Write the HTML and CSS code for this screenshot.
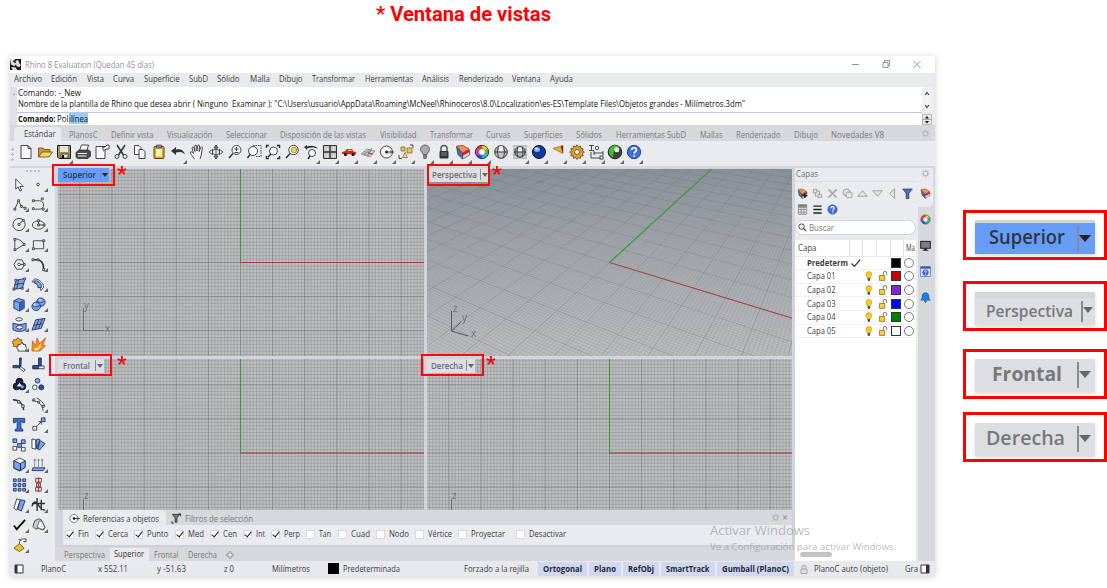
FILE: index.html
```html
<!DOCTYPE html>
<html lang="es">
<head>
<meta charset="utf-8">
<title>Ventana de vistas</title>
<link rel="stylesheet" href="styles.css">
</head>
<body>
<h1 class="heading"><span data-w="175">* Ventana de vistas</span></h1>
<div class="page">
<main class="window">
  <header class="titlebar">
    <svg class="logo" viewBox="0 0 12 12"><rect width="12" height="12" fill="#111"/><path d="M0 0h6L3 3 7 5 5 8 1 6zM6 2l3-1 1 3 2 3-2 2-3-1zM1 9l5 0 2 3H3z" fill="#ddd"/></svg>
    <span class="app-name" data-w="129">Rhino 8 Evaluation (Quedan 45 días)</span>
    <svg class="wbtns" viewBox="0 0 72 12"><path d="M2 6.500h7M33 4.500h5v5h-5zM34.500 4V2.500h5v5H38M63.500 3l7 7M70.500 3l-7 7" fill="none" stroke="#888" stroke-width=".9"/></svg>
  </header>
  <nav class="menu">
    <span data-w="28">Archivo</span><span data-w="26">Edición</span><span data-w="17">Vista</span><span data-w="21">Curva</span><span data-w="35.500">Superficie</span><span data-w="19">SubD</span><span data-w="22.500">Sólido</span><span data-w="20">Malla</span><span data-w="23.500">Dibujo</span><span data-w="43">Transformar</span><span data-w="48">Herramientas</span><span data-w="27">Análisis</span><span data-w="44">Renderizado</span><span data-w="28.500">Ventana</span><span data-w="23">Ayuda</span>
  </nav>
  <section class="command">
    <div class="grip"></div>
    <div class="cmd-body">
      <div class="history"><p><span data-w="63">Comando: -_New</span></p><p><span data-w="727">Nombre de la plantilla de Rhino que desea abrir ( Ninguno&nbsp; Examinar ): "C:\Users\usuario\AppData\Roaming\McNeel\Rhinoceros\8.0\Localization\es-ES\Template Files\Objetos grandes - Milímetros.3dm"</span></p></div>
      <div class="prompt"><b data-w="37.500">Comando:</b><span class="typed" data-w="11.500">Pol</span><span class="sel" data-w="19">ilínea</span></div>
    </div>
    <svg class="cmd-scroll" viewBox="0 0 10 39"><path d="M0 0h10v25H0z" fill="#f3f3f3"/><path d="M3 8l2-2.500L7 8M3 18l2 2.500L7 18" fill="none" stroke="#444" stroke-width="1.200"/><path d="M.5 27.500h9v5h-9zM.5 32.500h9v5h-9z" fill="#e6e6e6" stroke="#999" stroke-width=".6"/><path d="M3 31.500l2-2.500 2 2.500zM3 34l2 2.500L7 34z" fill="#111"/></svg>
  </section>
  <nav class="tabs">
    <span class="tab on"><span data-w="31.500">Estándar</span></span><span data-w="28.500">PlanosC</span><span data-w="42.500">Definir vista</span><span data-w="45.500">Visualización</span><span data-w="41">Seleccionar</span><span data-w="86">Disposición de las vistas</span><span data-w="36.500">Visibilidad</span><span data-w="43">Transformar</span><span data-w="24.500">Curvas</span><span data-w="38.500">Superficies</span><span data-w="26">Sólidos</span><span data-w="70">Herramientas SubD</span><span data-w="22.500">Mallas</span><span data-w="44.500">Renderizado</span><span data-w="24">Dibujo</span><span data-w="53">Novedades V8</span>
    <svg class="gear" viewBox="0 0 10 10"><use href="#gear"/></svg>
  </nav>
  <div class="toolbar">
    <div class="grip"></div>
    <i><svg viewBox="0 0 16 16"><path d="M3 1.500h7l3 3v10H3zM10 1.500v3h3" class="k w"/></svg></i>
    <i><svg viewBox="0 0 16 16"><path d="M1.500 13V4H6l1 1.500h6V8" fill="#d99a1c" stroke="#543" stroke-width=".8"/><path d="M1.500 13L5 8h10.500L12 13z" fill="#ffd65a" stroke="#543" stroke-width=".8"/></svg></i>
    <i class="m"><svg viewBox="0 0 16 16"><path d="M1.500 1.500h13v13H3l-1.500-1.500z" fill="#9a9250" stroke="#222"/><path d="M4 2h8v6H4z" fill="#e4e4dc"/><path d="M5 10h7v4H5z" fill="#ddd" stroke="#222" stroke-width=".7"/><path d="M6 11h2v3H6z"/></svg></i>
    <i><svg viewBox="0 0 16 16"><path d="M4.500 6.500l2-5.500h7L12 6.500" class="k w"/><path d="M1 8.500L4 6h9.500l2 1.500v4.500L13 14.500H2.500L1 12.500z" fill="#4a4a4a" stroke="#222" stroke-width=".7"/><path d="M2.500 9.500h9.500M3 12h8.500" stroke="#fff" stroke-width="1.200"/></svg></i>
    <i><svg viewBox="0 0 16 16"><path d="M2 2.500h9v12H2z" class="k w"/><path d="M8 3h3l2-2h2v4h-3L9 7M9 3v3" class="k w"/></svg></i>
    <i><svg viewBox="0 0 16 16"><path d="M4 1l6.500 10M12 1L5.500 11" class="k t"/><circle cx="4" cy="12.500" r="2" class="k"/><circle cx="12" cy="12.500" r="2" class="k"/></svg></i>
    <i><svg viewBox="0 0 16 16"><path d="M2.500 1.500H7l2 2v7H2.500z" class="k w"/><path d="M7 5.500h4l2 2v7H7z" class="k w"/></svg></i>
    <i><svg viewBox="0 0 16 16"><rect x="3" y="2.500" width="10" height="12" rx="1" fill="#e7a928" stroke="#543"/><path d="M5 5h6v7.500H5z" fill="#fff3b0"/><path d="M5.500 1h5v3h-5z" fill="#888" stroke="#333" stroke-width=".6"/></svg></i>
    <i class="m"><svg viewBox="0 0 16 16"><path d="M1 7l5-4v2.500c5-1 8 1 9 5-2.500-3-5-3-9-2V11z" fill="#333"/></svg></i>
    <i><svg viewBox="0 0 16 16"><path d="M5.500 15C4 12.500 1.200 10 1.200 8.300c1-1 2.300-.2 3.300 1.200L3 4c.3-1.400 1.700-1.200 2 0l1 3.500L5.700 2c.3-1.300 1.800-1.200 2 0l.3 5 .6-5.200c.4-1.200 1.800-1 1.900.2L10.200 7.500l1.500-4c.6-1 1.900-.6 1.700.6L12.300 11l-1.300 4" class="k w"/></svg></i>
    <i><svg viewBox="0 0 16 16"><path d="M8 1v14M8 1L6 4h4zM8 15l-2-3h4z" class="k w"/><path d="M4 6.500c2.500-1.200 5.500-1.200 8 0M4 9.500c2.500 1.200 5.500 1.200 8 0M1 8l3.500-2.500v5zM15 8l-3.500-2.500v5z" class="k w"/></svg></i>
    <i><svg viewBox="0 0 16 16"><circle cx="9.500" cy="6" r="4.500" class="k w"/><path d="M6 9.500L2 14" class="k t"/><path d="M7.500 5h4M9.500 3v4M7.500 8.500h4" class="k"/></svg></i>
    <i><svg viewBox="0 0 16 16"><circle cx="7" cy="7" r="4.500" class="k w"/><path d="M4 10.500L1.500 14" class="k t"/><path d="M7 1.500h8v11H9" class="k" stroke-dasharray="1.500 1"/></svg></i>
    <i><svg viewBox="0 0 16 16"><circle cx="8.500" cy="7" r="4" class="k w"/><path d="M6 10l-3 3" class="k t"/><path d="M1.500 4V1.500H4M12 1.500h2.500V4M14.500 12v2.500H12M1.500 12v2.500H4" class="k t"/></svg></i>
    <i><svg viewBox="0 0 16 16"><circle cx="9.500" cy="6" r="4.700" class="k w"/><circle cx="10" cy="6" r="2.800" fill="#f2dc19" stroke="#776" stroke-width=".7"/><path d="M6 9.500L2 14" class="k t"/></svg></i>
    <i class="m"><svg viewBox="0 0 16 16"><path d="M1 3l3-2v1.500c4-1.500 9-1 11 2.500-3-2-7-2-11-.5V6z" fill="#333"/><circle cx="9" cy="9" r="3.500" class="k w"/><path d="M7 12l-2 3" class="k t"/></svg></i>
    <i class="m"><svg viewBox="0 0 16 16"><path d="M1.500 1.500h13v13h-13z" fill="#c4c4c4" stroke="#333"/><path d="M8 1.500v13M1.500 8h13" stroke="#333" stroke-width="1.400"/><path d="M5 3v4M3 5h4M11.500 3v4M9.500 5h4M5 10v4M3 12h4M11.500 10v4M9.500 12h4" stroke="#eee" stroke-width=".7"/></svg></i>
    <i class="m"><svg viewBox="0 0 16 16"><path d="M1 10V8l3-.8L6 5h5l1.500 2.500 2.500.5v2.500z" fill="#dc2418"/><path d="M6.500 7l1-1.200h2.800L11 7z" fill="#f6c0b8"/><circle cx="4.500" cy="10.500" r="1.500"/><circle cx="12" cy="10.500" r="1.500"/></svg></i>
    <i class="m"><svg viewBox="0 0 16 16"><path d="M1 10l6-5 8 2-5 6zM4 7.500l8 3M3 9l6 3M9 5.500L4 11M11.500 6L7 12" stroke="#888" fill="#ccc" stroke-width=".8"/><path d="M8 9l4-5" stroke="#28a43a"/><path d="M8 9l5 1" stroke="#c33"/></svg></i>
    <i class="m"><svg viewBox="0 0 16 16"><circle cx="7.500" cy="8" r="6" class="k w"/><path d="M7.500 8H15M12 6.500v3" class="k"/><circle cx="7.500" cy="8" r="1.600" fill="#333"/></svg></i>
    <i class="m"><svg viewBox="0 0 16 16"><path d="M3 3h4v4H3zM9 4h5v5H9z" fill="#f7c52b" stroke="#765" stroke-width=".8"/><path d="M7 8.500l2.500 5h-5z" fill="#fbe29a" stroke="#765" stroke-width=".8"/><path d="M1 11v3.500h3M12 1h3v3" class="k"/></svg></i>
    <i class="m"><svg viewBox="0 0 16 16"><path d="M8 1a4.500 4.500 0 0 1 4.500 4.500c0 2-2 3-2.500 5H6c-.5-2-2.500-3-2.500-5A4.500 4.500 0 0 1 8 1z" fill="#aaa" stroke="#666"/><path d="M6 11h4v3l-1 1H7l-1-1z" fill="#777"/></svg></i>
    <i class="m"><svg viewBox="0 0 16 16"><path d="M5 7V4.500a3 3 0 0 1 6 0V7" fill="none" stroke="#555" stroke-width="1.500"/><rect x="3.500" y="7" width="9" height="7.500" rx="1" fill="#333"/><path d="M5 9h6M5 11h6" stroke="#888"/></svg></i>
    <i class="m"><svg viewBox="0 0 16 16"><use href="#layer"/></svg></i>
    <i class="m"><svg viewBox="0 0 16 16"><use href="#wheel"/></svg></i>
    <i><svg viewBox="0 0 16 16"><circle cx="8" cy="8" r="6.300" fill="#c4c4c4" stroke="#333"/><path d="M6 2.200h4V8H6z" fill="#f4f4f4"/><path d="M6 2C4 6 4 10 6 14M10 2c2 4 2 8 0 12M2 8h12" class="k"/></svg></i>
    <i class="m"><svg viewBox="0 0 16 16"><path d="M1 2h14M1 5h14M1 8h14M1 11h14M1 14h14M2 1v14M5 1v14M8 1v14M11 1v14M14 1v14" stroke="#888" stroke-width=".6"/><circle cx="8" cy="8" r="5.300" fill="#b4b4b4" stroke="#333"/><path d="M6.200 3.200h3.600V8H6.200z" fill="#eee"/><path d="M6 3C4.500 7 4.500 9 6 13M10 3c1.500 4 1.500 6 0 10M3 8h10" class="k"/></svg></i>
    <i class="m"><svg viewBox="0 0 16 16"><circle cx="8" cy="8" r="6.500" fill="#0e3a9c" stroke="#112"/><ellipse cx="6" cy="5.500" rx="3" ry="2.500" fill="#7fa8f5"/><circle cx="5.500" cy="5" r="1" fill="#fff"/></svg></i>
    <i class="m"><svg viewBox="0 0 16 16"><path d="M3 4.500l10-3v8z" fill="#eea62c" stroke="#8a5712" stroke-width=".6"/><path d="M10.500 2.500l2.500-1v8z" fill="#7b3420"/></svg></i>
    <i class="m"><svg viewBox="0 0 16 16"><path d="M8 .8l1.200 2 2.200-.8.500 2.300 2.300.5-.8 2.200 2 1.200-2 1.200.8 2.200-2.300.5-.5 2.300-2.200-.8-1.200 2-1.200-2-2.200.8-.5-2.300L1.800 11.600l.8-2.200-2-1.200 2-1.200-.8-2.200 2.300-.5.500-2.300 2.200.8z" fill="#e6a020" stroke="#543" stroke-width=".8"/><circle cx="8" cy="8" r="2.500" fill="#f4f4f4" stroke="#543" stroke-width=".8"/></svg></i>
    <i class="m"><svg viewBox="0 0 16 16"><path d="M1 1.500h5M3.500 1.500v5M1 6.500h5M6 9h9M6 7v4M15 7v4M3 8v6h9" class="k"/><circle cx="9" cy="4" r="1.700" class="k w"/><rect x="12" y="12" width="3" height="3" class="k w"/></svg></i>
    <i class="m"><svg viewBox="0 0 16 16"><circle cx="8" cy="8" r="6.800" fill="#3c443c" stroke="#222"/><path d="M2.500 5a6.300 6.300 0 0 1 10-2c-5 1-7 5-6 10.500C2.500 12 .8 8 2.500 5z" fill="#43bd32"/><circle cx="9.800" cy="5.800" r="2.500" fill="#e8f8e0"/></svg></i>
    <i class="m"><svg viewBox="0 0 16 16"><use href="#help"/></svg></i>
  </div>
  <div class="work">
    <aside class="tools"><div class="dots"></div><div class="toolgrid">
      <i><svg viewBox="0 0 16 16"><path d="M4 2v11l2.500-2.500L8.500 15l1.800-.8-2-4H12z" class="k w"/></svg></i>
      <i class="m"><svg viewBox="0 0 16 16"><circle cx="7.500" cy="8" r="1.400" class="k"/></svg></i>
      <i class="m"><svg viewBox="0 0 16 16"><path d="M3 13L7 4l3 6 4 2" class="k"/><path d="M2 12h2v2H2zM6 3h2v2H6zM13 11h2v2h-2zM9 9h2v2H9z" class="k w"/></svg></i>
      <i class="m"><svg viewBox="0 0 16 16"><path d="M3 4h6c6 0 6 9 0 9H4" class="k"/><path d="M1.500 3h2v2h-2zM11 1h2v2h-2zM1.500 11.500h2v2h-2zM12 12h2v2h-2z" class="k w"/></svg></i>
      <i class="m"><svg viewBox="0 0 16 16"><circle cx="7.500" cy="8" r="6.500" class="k"/><path d="M7.500 8L12 3" class="k"/><path d="M6.500 7h2v2h-2zM11 2.500h2v2h-2z" class="k w"/></svg></i>
      <i class="m"><svg viewBox="0 0 16 16"><ellipse cx="8" cy="8.500" rx="6.500" ry="4.500" class="k"/><path d="M8 8.500V4M8 8.500h6" class="k"/><path d="M7 7.500h2v2H7zM7 3h2v2H7zM13 7.500h2v2h-2z" class="k w"/></svg></i>
      <i class="m"><svg viewBox="0 0 16 16"><path d="M3 2v12l10-6C11 4 7 2 3 2" class="k"/><path d="M2 1.500h2v2H2zM2 12.500h2v2H2zM12 7h2v2h-2z" class="k w"/></svg></i>
      <i class="m"><svg viewBox="0 0 16 16"><path d="M2.500 4h11v8.500h-11z" class="k"/><path d="M1.500 11.500h2v2h-2zM12.500 3h2v2h-2z" class="k w"/></svg></i>
      <i class="m"><svg viewBox="0 0 16 16"><path d="M2 8l3-5h5.500l3 5-3 5H5z" class="k"/><circle cx="7.500" cy="8" r="1.400" class="k w"/><path d="M9 8h4" class="k"/><path d="M12 7h2v2h-2z" class="k w"/></svg></i>
      <i class="m"><svg viewBox="0 0 16 16"><path d="M2 3h4c5.500 0 7.500 4 7.500 10" fill="none" stroke="#333" stroke-width="1.700"/><path d="M1 2h2v2H1zM12.500 12.500h2v2h-2zM6.500 2h2v2h-2z" class="k w"/></svg></i>
      <i class="m"><svg viewBox="0 0 16 16"><path d="M4 3.500l10-2L11 12l-9 1z" class="b"/><path d="M7 3l-2 9.500M3 8l10-1.500" class="k"/><path d="M3 2.500h2v2H3zM12.500 1h2v2h-2zM1 12h2v2H1zM10 11h2v2h-2z" class="k w"/></svg></i>
      <i class="m"><svg viewBox="0 0 16 16"><path d="M1 5l3-3c5 .5 9 4 9.500 9l-3 3.500c-.5-5-4-9-9.500-9.500z" class="k w"/><path d="M4 4c5 0 7 3 7.500 7l-4 .5C7.500 8.500 6 7 3.500 6.500z" class="b"/></svg></i>
      <i class="m"><svg viewBox="0 0 16 16"><path d="M2 4l5-2.500 6 2v8.500l-5 3-6-3z" class="b"/><path d="M2 4l6 2 5-2.500M8 6v9" class="k"/><path d="M8 6l5-2.500V12l-5 3z" fill="#345fbd"/></svg></i>
      <i class="m"><svg viewBox="0 0 16 16"><circle cx="10.500" cy="5.500" r="4.500" class="b"/><circle cx="5.500" cy="10" r="4.500" class="b"/><path d="M1.500 9c3 2 5 2 8 0M6.500 4.500c3 2 5 2 8 0" fill="none" stroke="#1d3a80" stroke-width=".8"/><circle cx="4" cy="8" r="1.200" fill="#cfe0ff"/><circle cx="9.500" cy="3.300" r="1.200" fill="#cfe0ff"/></svg></i>
      <i class="m"><svg viewBox="0 0 16 16"><ellipse cx="7.500" cy="2.500" rx="3.500" ry="1.700" class="k w"/><path d="M1 6.500c4 2 10 2 14 0v7c-4 2.500-10 2.500-14 0z" class="b"/><ellipse cx="8" cy="11" rx="3.500" ry="1.800" class="k w"/></svg></i>
      <i class="m"><svg viewBox="0 0 16 16"><path d="M5 3l10-1.500-4 10.500-10 2z" class="b"/><path d="M8.500 2.500L4.500 13M12 2L8 12.500M3 9l9.500-2" class="k"/></svg></i>
      <i class="m"><svg viewBox="0 0 16 16"><path d="M1.500 3h3c0-2.500 3.500-2.500 3.500 0h2.500v3c2.500 0 2.500 3 0 3v1h-9V7c-2 0-2-2.500 0-2.500z" fill="#f2a51d" stroke="#543" stroke-width=".8"/><path d="M6.500 8h2.500c0-2 3-2 3 0h2.500v2.500c2 0 2 3 0 3V15h-8v-2c-2 0-2-3 0-3z" class="k w"/></svg></i>
      <i><svg viewBox="0 0 16 16"><path d="M1 15L1.500 4l3.500 5L6.500 1l2.500 6L15.500 1l-3 8h3l-6 6z" fill="#f39517" stroke="#b3471a" stroke-width=".7"/><path d="M3.500 14l1.500-3 2 1 4-5-1 4-3 3z" fill="#fff0a2"/></svg></i>
      <i><svg viewBox="0 0 16 16"><path d="M9 10l5 3.500-1.500 2L8 12z" class="k w"/><path d="M1 9h7v2.500H1zM8 1h2l-.5 9L8 10z" class="n"/></svg></i>
      <i><svg viewBox="0 0 16 16"><path d="M2 9.500h12v3H2z" class="k w"/><path d="M2 9h6v3.500H2zM8 1h3v8.500H8z" class="n"/></svg></i>
      <i class="m"><svg viewBox="0 0 16 16"><circle cx="8" cy="5" r="3.700" fill="#16284f" stroke="#111"/><circle cx="5" cy="10" r="3.700" fill="#16284f" stroke="#111"/><circle cx="11" cy="10" r="3.700" fill="#16284f" stroke="#111"/><path d="M8 6l3 4H5z" fill="#e8eefc"/><circle cx="11" cy="10.500" r="1.700" fill="#7ba3ef"/></svg></i>
      <i><svg viewBox="0 0 16 16"><circle cx="7" cy="4" r="2.500" class="b"/><circle cx="4" cy="11" r="2.500" class="k w"/><circle cx="11" cy="11" r="2.700" class="n"/></svg></i>
      <i><svg viewBox="0 0 16 16"><path d="M1 3c7 0 11 5 11.500 11" class="k t"/><path d="M6 4h2.500v2.500H6zM10.500 8.500H13V11h-2.500z" class="k w"/></svg></i>
      <i class="m"><svg viewBox="0 0 16 16"><path d="M1 4c7 0 11 4 12 11M6 1c4 2 7 5 9 9" class="k"/><path d="M2 2h2v2H2zM7 4.500h2v2H7zM12 9h2v2h-2z" class="k w"/></svg></i>
      <i><svg viewBox="0 0 16 16"><path d="M1.500 1.500h12V6h-2l-.5-1.500H9.500v8l2 .5v2h-8v-2l2-.5v-8H4L3.500 6h-2z" class="b dkb"/></svg></i>
      <i class="m"><svg viewBox="0 0 16 16"><path d="M2 10h4v4H2z" class="k w"/><path d="M11 1h4v4h-4z" class="b"/><path d="M6 10l5-5M8 5h3v3" class="k"/></svg></i>
      <i><svg viewBox="0 0 16 16"><path d="M1 2h4v4H1zM10 3h4v4h-4zM6 7h4v4H6z" class="b"/><path d="M1 10h4v4H1zM10 11h4v4h-4z" class="k w"/></svg></i>
      <i><svg viewBox="0 0 16 16"><path d="M1 2l4 1v10l-4-1z" class="k w"/><path d="M6 2.500h3.500l-2 10H6zM10 4l5 3-6 7-3-2.500z" class="b"/></svg></i>
      <i class="m"><svg viewBox="0 0 16 16"><path d="M2 4l6-3 6 3v7l-6 4-6-3z" class="k w"/><path d="M2 4l7 3v7.500L2 12zM9 7l5-3v7l-5 3.500z" class="b"/></svg></i>
      <i class="m"><svg viewBox="0 0 16 16"><path d="M2 11.500h13l-2 3H1z" class="b"/><path d="M4 11V2M8 11V2M12 11V2M3 4l1-2 1 2M7 4l1-2 1 2M11 4l1-2 1 2" stroke="#888" fill="none"/></svg></i>
      <i class="m"><svg viewBox="0 0 16 16"><path d="M1.500 2h3v3h-3zM6.500 2h3v3h-3zM11.500 2h3v3h-3zM1.500 7h3v3h-3zM6.500 7h3v3h-3zM11.500 7h3v3h-3zM1.500 12h3v3h-3zM6.500 12h3v3h-3zM11.500 12h3v3h-3z" class="b"/></svg></i>
      <i class="m"><svg viewBox="0 0 16 16"><path d="M5 1.500h6v4H5zM6 6.500h4v4H6zM5 11h6v4H5z" class="k w"/><path d="M8 .5v15" stroke="#f02020" stroke-width="1.500"/></svg></i>
      <i class="m"><svg viewBox="0 0 16 16"><path d="M5 2l4 1-4 11-3-2z" class="k w"/><path d="M9 3l5 1-4 11-4-2z" class="b"/></svg></i>
      <i class="m"><svg viewBox="0 0 16 16"><path d="M1 10c2-6 4-6 7-1s4 4 7 5M6.500 1v14M11 3v11M1 7h14" class="k t"/></svg></i>
      <i class="m"><svg viewBox="0 0 16 16"><path d="M2 9l3 4L14 3" fill="none" stroke="#111" stroke-width="2"/></svg></i>
      <i class="m"><svg viewBox="0 0 16 16"><path d="M2 10l2-6 4-2 3 1 4 8-2 3-5-2-3 1z" fill="#c9c9c9" stroke="#444"/><path d="M6.500 11L9 4l3 1 2.500 6-2 2.500z" fill="#f0f0f0" stroke="#555" stroke-width=".8"/></svg></i>
      <i class="m"><svg viewBox="0 0 16 16"><path d="M2 12l6-5 5 5-5 3.500z" fill="#f0c028" stroke="#543" stroke-width=".8"/><path d="M8 7c0-3 1-5 4-5h3v3h-3M7 2.500l3 1" class="k w"/></svg></i>
    </div></aside>
    <section class="center">
      <div class="views">
        <div class="view"><canvas id="top" width="366" height="187"></canvas></div>
        <div class="view"><canvas id="persp" width="365" height="187"></canvas></div>
        <div class="view"><canvas id="front" width="366" height="151"></canvas></div>
        <div class="view"><canvas id="right" width="365" height="151"></canvas></div>
      </div>
      <div class="osnap">
        <div class="os-tabs">
          <span class="os-tab on"><svg viewBox="0 0 12 12"><circle cx="5.500" cy="6" r="4.500" fill="#f5f5f5" stroke="#555" stroke-width=".7"/><path d="M5.500 6H12M9 4.500v3" stroke="#333" stroke-width=".8"/><circle cx="5.500" cy="6" r="1.300"/></svg><span data-w="76">Referencias a objetos</span></span>
          <span class="os-tab"><svg viewBox="0 0 12 12"><path d="M1.500 1.500h8l-3 4v4.500h-2V5.500z" fill="#777" stroke="#222" stroke-width=".8"/><path d="M8 1h2.500v2.500M1 9v2h2" fill="none" stroke="#222"/></svg><span data-w="68">Filtros de selección</span></span>
          <svg class="os-close" viewBox="0 0 22 10"><use href="#gear"/><path d="M13.500 3l4 4M17.500 3l-4 4" stroke="#999" stroke-width="1.300"/></svg>
        </div>
        <div class="checks">
          <label class="c"><b></b><span data-w="11">Fin</span></label><label class="c"><b></b><span data-w="20">Cerca</span></label><label class="c"><b></b><span data-w="21.500">Punto</span></label><label class="c"><b></b><span data-w="16">Med</span></label><label class="c"><b></b><span data-w="14">Cen</span></label><label class="c"><b></b><span data-w="9">Int</span></label><label class="c"><b></b><span data-w="16">Perp</span></label><label><b></b><span data-w="12">Tan</span></label><label><b></b><span data-w="19">Cuad</span></label><label><b></b><span data-w="20">Nodo</span></label><label><b></b><span data-w="24">Vértice</span></label><label><b></b><span data-w="34">Proyectar</span></label><label class="last"><b></b><span data-w="37">Desactivar</span></label>
        </div>
      </div>
      <nav class="view-tabs"><span data-w="41">Perspectiva</span><span class="vt on"><span data-w="30">Superior</span></span><span data-w="24.500">Frontal</span><span data-w="29">Derecha</span><svg viewBox="0 0 8 8"><path d="M3 .8h2v2.200h2.200v2H5v2.200H3V5H.8V3H3z" fill="#eee" stroke="#888" stroke-width=".8"/></svg></nav>
    </section>
    <aside class="side">
      <div class="layers">
        <div class="side-title"><span data-w="22">Capas</span></div>
        <div class="side-icons">
          <svg viewBox="0 0 16 16"><use href="#layer"/><path d="M8 11h7M11.500 7.500v7" stroke="#111" stroke-width="2"/></svg>
          <svg viewBox="0 0 16 16"><path d="M2 2h5v5H2zM5 7v5h3M9 9h5v5H9zM7 4.500h4V9" class="g"/></svg>
          <svg viewBox="0 0 16 16"><path d="M2 2l12 12M14 2L2 14" stroke="#aaa" stroke-width="2.500"/></svg>
          <svg viewBox="0 0 16 16"><circle cx="6.500" cy="6.500" r="5" class="g"/><rect x="6" y="6" width="8.500" height="8" rx="2" class="g"/></svg>
          <svg viewBox="0 0 16 16"><path d="M8 4l7 8H1z" class="g"/></svg>
          <svg viewBox="0 0 16 16"><path d="M8 12l7-8H1z" class="g"/></svg>
          <svg viewBox="0 0 16 16"><path d="M4 8l7-7v14z" class="g"/></svg>
          <svg viewBox="0 0 16 16"><path d="M1 1.500h14l-5 6v8H6v-8z" fill="#4973c7" stroke="#1c2f62"/></svg>
          <svg viewBox="0 0 16 16"><path d="M2 1h12v14H2zM2 5h12M2 8h12M2 12h12M6 1v14M10 1v14" fill="none" stroke="#888" stroke-width="1.200"/><path d="M2 1h12v3H2z" fill="#777"/></svg>
          <svg viewBox="0 0 16 16"><path d="M2 3h12M2 8h12M2 13h12" stroke="#222" stroke-width="2"/></svg>
          <svg viewBox="0 0 16 16"><use href="#help"/></svg>
        </div>
        <div class="search"><svg viewBox="0 0 10 10"><circle cx="4" cy="4" r="3" fill="none" stroke="#333"/><path d="M6 6l3 3" stroke="#333" stroke-width="1.200"/></svg><span data-w="25">Buscar</span></div>
        <div class="table">
          <div class="thead"><span class="name"><span data-w="18.500">Capa</span></span><s></s><s></s><s></s><s></s><span class="mat"><span data-w="9">Ma</span></span></div>
          <div class="tr cur"><span class="name"><b data-w="41">Predeterm</b></span><svg viewBox="0 0 14 12"><path d="M2.500 6.500l3 3 6-7" fill="none" stroke="#333" stroke-width="1.200"/></svg><s></s><s></s><em class="black"></em><u></u></div>
          <div class="tr"><span class="name"><span data-w="28.500">Capa 01</span></span><s></s><svg viewBox="0 0 14 12"><use href="#bulb"/></svg><svg viewBox="0 0 14 12"><use href="#lock"/></svg><em class="red"></em><u></u></div>
          <div class="tr"><span class="name"><span data-w="28.500">Capa 02</span></span><s></s><svg viewBox="0 0 14 12"><use href="#bulb"/></svg><svg viewBox="0 0 14 12"><use href="#lock"/></svg><em class="violet"></em><u></u></div>
          <div class="tr"><span class="name"><span data-w="28.500">Capa 03</span></span><s></s><svg viewBox="0 0 14 12"><use href="#bulb"/></svg><svg viewBox="0 0 14 12"><use href="#lock"/></svg><em class="blue"></em><u></u></div>
          <div class="tr"><span class="name"><span data-w="28.500">Capa 04</span></span><s></s><svg viewBox="0 0 14 12"><use href="#bulb"/></svg><svg viewBox="0 0 14 12"><use href="#lock"/></svg><em class="green"></em><u></u></div>
          <div class="tr"><span class="name"><span data-w="28.500">Capa 05</span></span><s></s><svg viewBox="0 0 14 12"><use href="#bulb"/></svg><svg viewBox="0 0 14 12"><use href="#lock"/></svg><em></em><u></u></div>
          <div class="hscroll"></div>
        </div>
      </div>
      <div class="side-tabs">
        <div class="active-tab"><svg class="g10" viewBox="0 0 10 10"><use href="#gear"/></svg><svg viewBox="0 0 16 16"><use href="#layer"/></svg></div>
        <svg viewBox="0 0 16 16"><use href="#wheel"/></svg>
        <svg viewBox="0 0 16 16"><rect x="1" y="2" width="14" height="10" fill="#7b8086" stroke="#222" stroke-width="1.500"/><path d="M6 12h4v2h2v1.500H4V14h2z" fill="#222"/></svg>
        <svg viewBox="0 0 16 16"><rect x="1" y="1" width="14" height="14" fill="#dfe7fa" stroke="#4565b8"/><path d="M1 1h14v3H1z" fill="#345cb4"/><circle cx="8" cy="9.500" r="4.500" fill="#3b63cc"/><path d="M6.500 8.500c0-2 3-2 3 0 0 1-1.500 1-1.500 2.200M8 12v1" stroke="#fff" stroke-width="1.200" fill="none"/></svg>
        <svg viewBox="0 0 16 16"><path d="M8 1c4 0 5 3 5 6s1 4 2 5H1c1-1 2-2 2-5s1-6 5-6zM6 13h4l-2 2.500z" fill="#0c83f2" stroke="#234" stroke-width=".6"/></svg>
      </div>
    </aside>
  </div>
  <footer class="status">
    <svg class="pane" viewBox="0 0 10 10"><path d="M1 1h8v8H1z" fill="#fff" stroke="#333"/><path d="M1 1h2.500v8H1z" fill="#333"/></svg>
    <span class="s1" data-w="25">PlanoC</span><span class="s2" data-w="30">x 552.11</span><span class="s3" data-w="29">y -51.63</span><span class="s4" data-w="10">z 0</span><span class="s5" data-w="38">Milímetros</span><span class="swatch"></span><span data-w="57">Predeterminada</span><span class="s6" data-w="65">Forzado a la rejilla</span>
    <b class="btn"><span data-w="39">Ortogonal</span></b><b class="btn"><span data-w="22">Plano</span></b><b class="btn"><span data-w="26">RefObj</span></b><b class="btn"><span data-w="43.500">SmartTrack</span></b><b class="btn"><span data-w="67">Gumball (PlanoC)</span></b>
    <svg class="padlock" viewBox="0 0 10 10"><path d="M3 5V3a2 2 0 0 1 4 0v2M2 5h6v4.500H2z" fill="#ddd" stroke="#999" stroke-width=".8"/></svg><span data-w="74">PlanoC auto (objeto)</span><span class="s7" data-w="13">Gra</span>
    <svg class="pane end" viewBox="0 0 10 10"><path d="M1 1h8v8H1z" fill="#fff" stroke="#333"/><path d="M6 1h3v8H6z" fill="#333"/></svg>
  </footer>

  <div class="vlabel v1 blue-l"><span data-w="33">Superior</span></div>
  <div class="vlabel v2"><span data-w="45">Perspectiva</span></div>
  <div class="vlabel v3"><span data-w="27">Frontal</span></div>
  <div class="vlabel v4"><span data-w="32">Derecha</span></div>
  <div class="mark m1"></div><div class="mark m2"></div><div class="mark m3"></div><div class="mark m4"></div>
  <span class="star st1">*</span><span class="star st2">*</span><span class="star st3">*</span><span class="star st4">*</span>
  <div class="watermark"><p class="wm1"><span data-w="100">Activar Windows</span></p><p class="wm2"><span data-w="186">Ve a Configuración para activar Windows.</span></p></div>
</main>
<aside class="callouts">
  <div class="callout"><div class="big b1 blue-l"><span data-w="76">Superior</span></div></div>
  <div class="callout"><div class="big b2"><span data-w="87">Perspectiva</span></div></div>
  <div class="callout"><div class="big b3"><span data-w="70">Frontal</span></div></div>
  <div class="callout"><div class="big b4"><span data-w="79">Derecha</span></div></div>
</aside>
</div>
<svg class="defs">
  <symbol id="gear" viewBox="0 0 10 10" width="10" height="10"><circle cx="5" cy="5" r="2.500" fill="none" stroke="#b5b8bc" stroke-width="1.300"/><path d="M5 .5v1.500M5 8v1.500M.5 5H2M8 5h1.500M1.800 1.800l1.100 1.100M7.100 7.100l1.100 1.100M8.200 1.800L7.100 2.900M2.900 7.100L1.800 8.200" stroke="#b5b8bc" stroke-width="1.200"/></symbol>
  <symbol id="layer" viewBox="0 0 16 16"><path d="M1.500 3l6 4.500V15L3 10.500z" fill="#4a6cae" stroke="#222" stroke-width=".6"/><path d="M7.500 10.500l7-4v4.500l-7 4z" fill="#dbe4f8" stroke="#222" stroke-width=".6"/><path d="M1.500 2l6.500-.5 6 3.500-6.500 4z" fill="#f2925c" stroke="#7c3422" stroke-width=".7"/><path d="M7.500 9l7-4v3l-7 4z" fill="#d61c16"/></symbol>
  <symbol id="help" viewBox="0 0 16 16"><circle cx="8" cy="8" r="6.700" fill="#3f6fdb" stroke="#29458c"/><path d="M5.700 6c0-3 4.700-3 4.700 0 0 1.700-2.200 1.700-2.200 3.500M8.200 11v1.700" fill="none" stroke="#fff" stroke-width="1.700"/></symbol>
  <symbol id="wheel" viewBox="0 0 16 16"><g fill="none" stroke-width="3.300"><path d="M8 3a5 5 0 0 1 4.330 2.500" stroke="#f4d01a"/><path d="M12.330 5.500a5 5 0 0 1 0 5" stroke="#3cc13b"/><path d="M12.330 10.500A5 5 0 0 1 8 13" stroke="#16bcd8"/><path d="M8 13a5 5 0 0 1-4.330-2.500" stroke="#2a4be0"/><path d="M3.670 10.500a5 5 0 0 1 0-5" stroke="#d02fc6"/><path d="M3.670 5.500A5 5 0 0 1 8 3" stroke="#f0302a"/></g><circle cx="8" cy="8" r="6.700" fill="none" stroke="#222" stroke-width=".8"/><circle cx="8" cy="8" r="3.300" fill="#fff" stroke="#444" stroke-width=".5"/></symbol>
  <symbol id="bulb" viewBox="0 0 14 12"><path d="M7 1.500a3 3 0 0 1 3 3C10 6 8.500 6.500 8.500 8h-3C5.500 6.500 4 6 4 4.500a3 3 0 0 1 3-3z" fill="#fccb1c" stroke="#b98d14" stroke-width=".6"/><path d="M5.700 8h2.600v2l-.6 1H6.300l-.6-1z" fill="#565656"/></symbol>
  <symbol id="lock" viewBox="0 0 14 12"><path d="M7.500 5.500V3a1.700 1.700 0 0 1 3.400 0v2" fill="none" stroke="#777"/><path d="M3.500 5.500h5.500v5H3.500z" fill="#f5cf3c" stroke="#77601e" stroke-width=".7"/></symbol>
</svg>
<script src="app.js"></script>
</body>
</html>
```
FILE: styles.css
```css
* { box-sizing: border-box; }
body { margin: 0; width: 1107px; height: 588px; overflow: hidden; background: #fff; font: 8.4px/12px "Open Sans", "Noto Sans", sans-serif; color: #3c3e42; }
p { margin: 0; }
i, em, u, s { font-style: normal; text-decoration: none; }
[data-w] { display: inline-block; white-space: nowrap; flex: none; }
[data-w] > .fit { display: inline-block; transform-origin: 0 50%; white-space: nowrap; }
.defs { display: none; }
.heading { margin: 0; height: 56px; padding-left: 376px; font: bold 20px/28px Roboto, sans-serif; color: #f00; }
.page { display: flex; }

.window { position: relative; width: 925px; height: 520px; margin-left: 10px; display: flex; flex-direction: column; background: #e9ebef; box-shadow: 0 1px 7px rgba(0,0,0,.2); flex: none; }
.titlebar { height: 17px; background: #fff; display: flex; align-items: center; flex: none; }
.logo { width: 11px; height: 11px; }
.app-name { margin-left: 3.500px; color: #929292; }
.wbtns { width: 72px; height: 12px; margin: -2px 13px 0 auto; }
.menu { height: 14px; display: flex; gap: 9.550px; padding: 0 0 2px 3.700px; align-items: center; background: #e8eaee; flex: none; line-height: 12px; }
.command { height: 39px; display: flex; flex: none; color: #111; border-bottom: 1px solid #d6d8dc; }
.command .grip { width: 7px; background: #dfe1e5 radial-gradient(circle, #b0b3b8 1px, transparent 1.200px) 50% 5px / 4px 5px no-repeat; }
.cmd-body { flex: 1; background: #fff; }
.history { height: 26px; border-bottom: 1px solid #bcc7e6; padding: 0 .7px; }
.history p { height: 11px; line-height: 12px; }
.prompt { display: flex; height: 12px; line-height: 12px; padding-left: .7px; }
.typed { margin-left: 2px; }
.sel { background: #9ccbf4; height: 11px; margin-top: 0; line-height: 12px; }
.cmd-scroll { width: 10px; height: 39px; margin-right: 3px; }
.tabs { height: 15px; display: flex; gap: 13.550px; align-items: center; background: #d6d8dc; color: #77797d; flex: none; padding: 2px 0 0 3.500px; position: relative; }
.tab.on { background: #e9ebef; height: 14px; padding: 1px 6px 0 10px; margin: -1px -6px 0 0; border-radius: 4px 4px 0 0; color: #444; }
.gear { width: 9px; height: 9px; margin: -2px 5px 0 auto; }
.toolbar { height: 25px; display: flex; align-items: center; flex: none; }
.toolbar .grip { width: 6px; height: 14px; background: radial-gradient(circle, #b6b9be 1px, transparent 1.200px) 0 0 / 5px 5px; flex: none; }
.toolbar i { width: 19px; height: 24px; display: flex; align-items: center; justify-content: center; position: relative; flex: none; padding-bottom: 3px; }
i svg { width: 16px; height: 16px; }
i.m::after { content: ""; position: absolute; right: 0; bottom: 2px; border-style: solid; border-width: 0 0 4px 4px; border-color: transparent transparent #666 transparent; }
.k { fill: none; stroke: #333; stroke-width: .9; }
.k.t { stroke-width: 1.500; }
.k.w { fill: #fafafa; }
.b { fill: #7ba3ef; stroke: #1d2d58; stroke-width: .9; }
.b.dkb { fill: #3d6fd6; }
.n { fill: #294f9f; stroke: #15254b; stroke-width: .8; }
.g { fill: #e3e4e6; stroke: #999; stroke-width: 1.300; }

.work { height: 395px; border-top: 2px solid #d3d6dd; display: flex; flex: none; }
.tools { width: 45px; flex: none; padding-left: .5px; }
.dots { height: 6px; width: 16px; margin-left: 14px; background: radial-gradient(circle, #bbbec3 1px, transparent 1.200px) 0 0 / 4px 6px; }
.toolgrid { display: grid; grid-template-columns: 18.500px 19px; grid-auto-rows: 20.050px; }
.toolgrid i { position: relative; display: flex; align-items: center; justify-content: center; }
.toolgrid i svg { width: 15px; height: 15px; }
.center { width: 740px; background: #cfd4df; display: flex; flex-direction: column; flex: none; }
.views { display: grid; grid-template-columns: 366px 365px; grid-template-rows: 187px 151px; gap: 3px; padding: 1px 3px 0; flex: none; }
.view canvas { display: block; }
.osnap { height: 37px; margin-left: 6px; margin-right: 2px; background: #e9ebef; border: solid #cdd1da; border-width: 0 1px 2px 2px; flex: none; }
.os-tabs { height: 15px; display: flex; background: #d6d8dc; color: #77797d; align-items: center; }
.os-tab { display: flex; align-items: center; gap: 3px; height: 15px; padding: 3px 5px 1px; }
.os-tab svg { width: 11px; height: 11px; margin-top: -1px; }
.os-tab.on { background: #e9ebef; color: #3c3e42; padding: 3px 7px 1px 6px; border-radius: 0 5px 0 0; }
.os-close { width: 22px; height: 9px; margin-left: auto; }
.checks { display: flex; height: 18px; gap: 6.150px; padding-left: 2px; align-items: center; }
.checks label { display: flex; gap: 4px; align-items: center; }
.checks b { width: 9px; height: 9px; background: #fff; border: 1px solid #d5d9e6; position: relative; }
.checks .c b::after { content: ""; position: absolute; left: 2px; top: -1px; width: 3px; height: 6px; border: solid #222; border-width: 0 1.500px 1.500px 0; transform: rotate(38deg); }
.last { margin-left: 4.500px; }
.view-tabs { height: 14px; background: #d6d8dc; display: flex; align-items: center; padding: 1px 0 0 8.700px; color: #77797d; flex: none; gap: 5px; }
.vt.on { background: #e9ebef; height: 13px; padding: 0 4.500px; color: #333; }
.view-tabs > span:nth-child(4) { margin-left: 5px; }
.view-tabs svg { width: 8px; height: 8px; margin-left: 4px; }

.side { flex: 1; display: flex; background: #d6d8dc; min-width: 0; }
.layers { width: 122.500px; background: #e9ebef; display: flex; flex-direction: column; }
.side-title { height: 14px; padding: 0 .5px; color: #6b6d70; border-bottom: 1px solid #dcdee2; }
.side-icons { display: flex; flex-wrap: wrap; gap: 5px 4px; padding: 6px 0 0 1.500px; height: 38px; align-content: flex-start; }
.side-icons svg { width: 11px; height: 11px; }
.search { height: 15px; margin: 0 2px 0 0; border: 1px solid #cdd2e6; border-radius: 8px; background: #fff; display: flex; align-items: center; padding-left: 2px; gap: 2px; color: #777; }
.search svg { width: 9px; height: 9px; }
.table { margin: 5px 2px 0 0; background: #fff; flex: 1; position: relative; overflow: hidden; }
.thead { display: flex; height: 16.500px; line-height: 15px; border-bottom: 1px solid #e9e9ee; }
.name { width: 53.500px; padding-left: 11.500px; flex: none; overflow: hidden; }
.thead .name { padding-left: 3px; }
.table s { width: 13.700px; flex: none; }
.thead s { border-left: 1px solid #e0e1e8; }
.thead .mat { border-left: 1px solid #e0e1e8; padding-left: 2px; white-space: nowrap; }
.tr { display: flex; align-items: center; height: 13.650px; border-bottom: 1px solid #f1f1f4; }
.tr svg { width: 13.700px; height: 12px; flex: none; }
.tr em { width: 10px; height: 10px; border: 1px solid #333; margin-left: 1.500px; flex: none; background: #fff; }
.tr u { width: 10px; height: 10px; border: 1px solid #777; border-radius: 50%; margin-left: 2.500px; flex: none; }
.tr em.black { background: #000; }
.tr em.red { background: #c80000; }
.tr em.violet { background: #8426d4; }
.tr em.blue { background: #00f; }
.tr em.green { background: #007f00; }
.hscroll { position: absolute; left: 5px; bottom: 4px; width: 32px; height: 5px; border-radius: 3px; background: #c3c3c3; }
.side-tabs { flex: 1; display: flex; flex-direction: column; align-items: center; gap: 15px; padding-right: 2px; }
.side-tabs svg { width: 11px; height: 11px; }
.active-tab { align-self: stretch; background: #e9ebef; height: 39px; border-radius: 0 0 5px 0; display: flex; flex-direction: column; align-items: center; gap: 10px; padding-top: 1px; margin-bottom: -8px; }
.active-tab svg.g10 { width: 9px; height: 9px; }

.status { height: 15px; background: #e7e9ed; display: flex; align-items: center; flex: none; white-space: nowrap; }
.pane { width: 10px; height: 10px; margin-left: 4px; }
.s1 { margin-left: 17px; }
.s2 { margin-left: 32px; }
.s3 { margin-left: 29px; }
.s4 { margin-left: 38px; }
.s5 { margin-left: 38px; }
.swatch { width: 11px; height: 11px; background: #000; margin: 0 4px 0 18px; }
.s6 { margin: 0 9px 0 63.500px; }
.btn { background: #cfd8f0; height: 14px; padding: 1px 5px; margin-right: 2.300px; color: #26282e; }
.padlock { width: 10px; height: 10px; margin: 0 5px 0 3px; }
.s7 { margin-left: 17px; }
.pane.end { margin-left: 2px; }

.vlabel { position: absolute; height: 14px; background: #dcdee2; color: #6c6c6c; font-weight: 600; line-height: 14px; padding-left: 5px; }
.vlabel::after, .big::after { content: ""; position: absolute; background: linear-gradient(#8a8a8a, #8a8a8a) 0 0 / 1px 100% no-repeat; }
.vlabel::after { width: 9px; height: 11px; top: 1px; right: 0; }
.vlabel::before, .big::before { content: ""; position: absolute; border-style: solid; border-color: #666 transparent transparent; }
.vlabel::before { border-width: 4px 3px 0; right: 1px; top: 5px; }
.vlabel.blue-l, .big.blue-l { background-color: #679cf9; color: #303640; }
.blue-l::before { border-top-color: #222; }
.v1 { left: 48px; top: 112px; width: 51px; }
.v2 { left: 418px; top: 112px; width: 61px; padding-left: 4px; }
.v3 { left: 48px; top: 303px; width: 46px; }
.v4 { left: 417px; top: 303px; width: 48px; padding-left: 4px; }
.mark { position: absolute; width: 63px; height: 22px; border: 2px solid #fb0808; }
.m1 { left: 42px; top: 108px; }
.m2 { left: 417px; top: 108px; }
.m3 { left: 39px; top: 298px; }
.m4 { left: 411px; top: 298px; }
.star { position: absolute; font: bold 21px/24px Roboto, sans-serif; color: #f00; width: 10px; }
.st1 { left: 107px; top: 106px; }
.st2 { left: 482px; top: 106px; }
.st3 { left: 107px; top: 296px; }
.st4 { left: 476px; top: 296px; }
.watermark { position: absolute; left: 700px; top: 466px; color: rgba(140,142,146,.6); }
.wm1 { font-size: 12.500px; line-height: 18px; }
.wm2 { font-size: 9.700px; line-height: 14px; }

.callouts { margin-left: 28px; padding-top: 153.500px; flex: none; }
.callout { width: 143.500px; height: 50px; border: 3px solid #f00; padding: 7.500px 9px; margin-bottom: 21.500px; }
.callout:nth-child(2) { margin-bottom: 17.500px; }
.callout:nth-child(3) { margin-bottom: 13.500px; }
.big { position: relative; width: 120px; height: 33px; background: #dcdee2; color: #77787b; font-size: 20px; font-weight: 600; line-height: 29px; padding-left: 14px; box-shadow: 0 2px 4px rgba(0,0,0,.15); border-top: 3px solid #d3d5da; }
.big.b1 { height: 34px; line-height: 27px; }
.big.b2 { font-size: 16.500px; padding-left: 11px; border-top-width: 6px; line-height: 26px; }
.big.b3 { padding-left: 17px; border-top: 0; line-height: 30px; font-weight: 700; }
.big.b4 { padding-left: 11px; border-top: 0; line-height: 30px; }
.big::after { width: 18px; height: 26px; top: 3px; right: 0; background-size: 2px 100%; }
.big.b2::after { height: 21px; width: 14px; }
.big::before { border-width: 7px 6px 0; right: 4px; top: 12px; }
.big.b2::before { border-width: 6px 5px 0; right: 2px; top: 9px; }
```
FILE: app.js
```js
// Fit labels to their column width with a horizontal scale.
document.querySelectorAll('[data-w]').forEach(el => {
  const w = parseFloat(el.dataset.w);
  const inner = document.createElement('span');
  inner.className = 'fit';
  while (el.firstChild) inner.appendChild(el.firstChild);
  el.appendChild(inner);
  const natural = inner.getBoundingClientRect().width;
  el.style.width = w + 'px';
  inner.style.transform = 'scaleX(' + (w / natural) + ')';
});

function line(c, x1, y1, x2, y2, color, width) {
  c.strokeStyle = color;
  c.lineWidth = width || 1;
  c.beginPath();
  c.moveTo(x1, y1);
  c.lineTo(x2, y2);
  c.stroke();
}

function axisText(c, list) {
  c.font = '10px "Open Sans", sans-serif';
  c.fillStyle = '#6d7073';
  list.forEach(([t, x, y]) => c.fillText(t, x, y));
}

// Orthographic construction plane: ten minor cells per major cell.
function plane(id, ox, oy) {
  const cv = document.getElementById(id), c = cv.getContext('2d');
  const W = cv.width, H = cv.height, dx = 3.213, dy = 3.41;
  c.fillStyle = '#bebfbf';
  c.fillRect(0, 0, W, H);
  for (let i = -120; i <= 120; i++) {
    const color = i % 10 === 0 ? 'rgba(115,120,126,.75)' : 'rgba(135,140,146,.48)';
    line(c, ox + i * dx, 0, ox + i * dx, H, color);
    line(c, 0, oy + i * dy, W, oy + i * dy, color);
  }
  line(c, ox, 0, ox, oy, '#35983a', 1.2);
  line(c, ox, oy, W, oy, '#a23c3e', 1.2);
  return c;
}

const topView = plane('top', 182.5, 93.5);
line(topView, 25.5, 139, 25.5, 162, '#6d7073');
line(topView, 25, 161.5, 46, 161.5, '#6d7073');
axisText(topView, [['y', 26, 140], ['x', 47, 163]]);

const front = plane('front', 182.5, 94);
line(front, 25.5, 140, 25.5, 151, '#6d7073');
axisText(front, [['z', 26, 140]]);

const right = plane('right', 182.5, 94);
line(right, 24.5, 140, 24.5, 151, '#6d7073');
axisText(right, [['z', 25, 140]]);

// Perspective view: camera looks at the origin, azimuth 30 deg, elevation 31.9 deg.
(function () {
  const c = document.getElementById('persp').getContext('2d');
  const W = 365, H = 187, F = 390, s = 0.528, k = Math.sqrt(1 - s * s);
  const bg = c.createLinearGradient(0, 0, 0, H);
  bg.addColorStop(0, '#979da5');
  bg.addColorStop(0.4, '#a6abb0');
  bg.addColorStop(1, '#bcbdbe');
  c.fillStyle = bg;
  c.fillRect(0, 0, W, H);
  const depth = (x, y) => 1 + k * (-0.5 * x + 0.866 * y);
  const project = (x, y) => {
    const d = depth(x, y);
    return [182.5 + F * (0.866 * x + 0.5 * y) / d, 93.5 - F * s * (-0.5 * x + 0.866 * y) / d];
  };
  function seg(x1, y1, x2, y2, color, width) {
    const near = 0.15;
    let a = depth(x1, y1), b = depth(x2, y2);
    if (a < near && b < near) return;
    if (a < near) { const t = (near - a) / (b - a); x1 += (x2 - x1) * t; y1 += (y2 - y1) * t; }
    if (b < near) { const t = (near - b) / (a - b); x2 += (x1 - x2) * t; y2 += (y1 - y2) * t; }
    line(c, ...project(x1, y1), ...project(x2, y2), color, width);
  }
  const u = 0.0075, n = 400, e = u * n;
  const minor = 'rgba(122,128,135,.26)', major = 'rgba(105,111,118,.42)';
  for (let i = -n; i <= n; i++) {
    if (i % 10 === 0) continue;
    seg(i * u, -e, i * u, e, minor, 0.8);
    seg(-e, i * u, e, i * u, minor, 0.8);
  }
  for (let i = -n; i <= n; i += 10) {
    seg(i * u, -e, i * u, e, major, 0.9);
    seg(-e, i * u, e, i * u, major, 0.9);
  }
  seg(0, 0, e, 0, '#a64a4a', 1.3);
  seg(0, 0, 0, e, '#3d9a40', 1.3);
  line(c, 24.5, 142, 24.5, 162, '#55585c');
  line(c, 24.5, 162, 34, 153, '#55585c');
  line(c, 24.5, 162, 41, 167, '#55585c');
  axisText(c, [['z', 26, 143], ['y', 35, 152], ['x', 44, 168]]);
})();
```
